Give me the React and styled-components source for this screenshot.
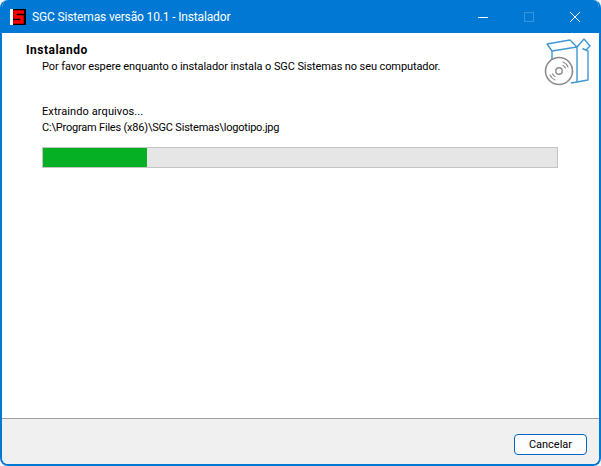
import React from "react";
import styled, { createGlobalStyle } from "styled-components";

const GlobalStyle = createGlobalStyle`
  html, body {
    margin: 0;
    padding: 0;
    background: #f4f4f4;
    overflow: hidden;
  }
`;

const Window = styled.div`
  box-sizing: border-box;
  width: 601px;
  height: 466px;
  display: flex;
  flex-direction: column;
  background: #ffffff;
  border: solid #0078d4;
  border-width: 0 2px 2px 2px;
  border-radius: 8px;
  overflow: hidden;
  font-family: Roboto, "Liberation Sans", sans-serif;
  font-size: 11px;
  color: #000000;
`;

const TitleBar = styled.div`
  height: 33px;
  margin: 0 -2px;
  padding-right: 3px;
  flex: none;
  display: flex;
  align-items: center;
  background: #0078d4;
  color: #ffffff;
`;

const AppIcon = styled.svg`
  width: 16px;
  height: 16px;
  margin-left: 10px;
  flex: none;
`;

const Title = styled.span`
  margin-left: 6px;
  font-size: 12px;
  letter-spacing: -0.15px;
  flex: 1;
`;

const WindowButton = styled.div`
  width: 46px;
  height: 33px;
  display: flex;
  align-items: center;
  justify-content: center;
`;

const Header = styled.div`
  height: 42px;
  flex: none;
  position: relative;
  padding: 9px 0 0 24px;
`;

const Heading = styled.div`
  font-weight: 700;
  font-size: 12px;
  line-height: 17px;
  letter-spacing: 0.5px;
`;

const SubHeading = styled.div`
  padding-left: 16px;
  line-height: 16px;
  letter-spacing: -0.1px;
`;

const BoxIcon = styled.svg`
  position: absolute;
  top: 2px;
  right: 4px;
  width: 55px;
  height: 52px;
`;

const Body = styled.div`
  flex: 1;
  padding: 20px 41px 0 40px;
`;

const StatusLine = styled.div`
  line-height: 16px;
  letter-spacing: ${(props) => props.$spacing || "0"};
`;

const ProgressTrack = styled.div`
  box-sizing: border-box;
  height: 21px;
  margin-top: 11px;
  background: #e6e6e6;
  border: 1px solid #c4c4c4;
`;

const ProgressFill = styled.div`
  height: 100%;
  background: #06b025;
`;

const Footer = styled.div`
  height: 46px;
  flex: none;
  display: flex;
  align-items: center;
  justify-content: flex-end;
  padding-right: 12px;
  padding-top: 5px;
  box-sizing: border-box;
  background: #f0f0f0;
  border-top: 1px solid #a0a0a0;
`;

const Button = styled.button`
  box-sizing: border-box;
  width: 73px;
  height: 21px;
  padding: 0;
  background: #fdfdfd;
  border: 1px solid #0067c0;
  border-radius: 4px;
  font-family: inherit;
  font-size: 11px;
  color: #000000;
`;

const App = () => {
  const progress = 20.3;

  return (
    <>
      <GlobalStyle />
      <Window>
        <TitleBar>
          <AppIcon viewBox="0 0 16 16">
            <rect width="16" height="16" fill="#000000" />
            <rect width="3" height="16" fill="#ffffff" />
            <path d="M14 3H5v5h7v5H3" fill="none" stroke="#ff0000" strokeWidth="3.5" />
          </AppIcon>
          <Title>SGC Sistemas versão 10.1 - Instalador</Title>
          <WindowButton>
            <svg width="12" height="12" viewBox="0 0 12 12">
              <path d="M1 6.5h10" stroke="#ffffff" strokeWidth="1" />
            </svg>
          </WindowButton>
          <WindowButton>
            <svg width="12" height="12" viewBox="0 0 12 12">
              <rect x="1.5" y="1.5" width="9" height="9" fill="none" stroke="#3a94dc" />
            </svg>
          </WindowButton>
          <WindowButton>
            <svg width="12" height="12" viewBox="0 0 12 12">
              <path d="M1 1l10 10M11 1L1 11" stroke="#ffffff" strokeWidth="1" />
            </svg>
          </WindowButton>
        </TitleBar>
        <Header>
          <Heading>Instalando</Heading>
          <SubHeading>
            Por favor espere enquanto o instalador instala o SGC Sistemas no seu computador.
          </SubHeading>
          <BoxIcon viewBox="0 0 55 52" fill="none">
            <g stroke="#3f97d3" strokeWidth="1.4" strokeLinejoin="round">
              <path d="M7 9L30 5L37 12L12 16z" />
              <path d="M12 16V28" />
              <path d="M37 12V47L48 45V16L42.5 13.5" />
              <path d="M31 48L37 47" />
              <path d="M37 12L44 4L50 11L46 15" />
            </g>
            <circle cx="19" cy="36" r="13.5" fill="#ffffff" stroke="#8c8c8c" strokeWidth="1.6" />
            <circle cx="19" cy="36" r="3.2" stroke="#8c8c8c" strokeWidth="1.4" />
            <g stroke="#8c8c8c" strokeWidth="1.2" strokeLinecap="round">
              <path d="M23 27a9.5 9.5 0 0 1 5 5" />
              <path d="M23 30.5a6.5 6.5 0 0 1 2.5 2.5" />
              <path d="M15 45a9.5 9.5 0 0 1-5-5" />
              <path d="M15 41.5a6.5 6.5 0 0 1-2.5-2.5" />
            </g>
          </BoxIcon>
        </Header>
        <Body>
          <StatusLine $spacing="0.1px">Extraindo arquivos...</StatusLine>
          <StatusLine $spacing="-0.2px">C:\Program Files (x86)\SGC Sistemas\logotipo.jpg</StatusLine>
          <ProgressTrack>
            <ProgressFill style={{ width: `${progress}%` }} />
          </ProgressTrack>
        </Body>
        <Footer>
          <Button>Cancelar</Button>
        </Footer>
      </Window>
    </>
  );
};

export default App;
